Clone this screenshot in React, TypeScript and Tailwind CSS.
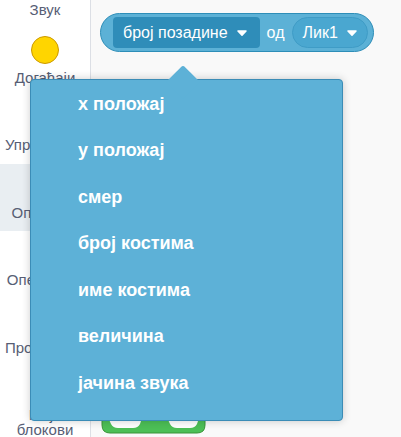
import React from 'react';

const categories = [
  { label: 'Звук', color: '#cf63cf', border: '#bd42bd' },
  { label: 'Догађаји', color: '#ffd500', border: '#cc9900' },
  { label: 'Управљање', color: '#ffab19', border: '#cf8b17' },
  { label: 'Опажање', color: '#5cb1d6', border: '#2e8eb8', selected: true },
  { label: 'Оператори', color: '#59c059', border: '#389438' },
  { label: 'Променљиве', color: '#ff8c1a', border: '#db6e00' },
  { label: 'Моји блокови', color: '#ff6680', border: '#ff3355' },
];

const menuItems = ['x положај', 'y положај', 'смер', 'број костима', 'име костима', 'величина', 'јачина звука'];

function Caret() {
  return (
    <svg width="10" height="6" viewBox="0 0 10 6" className="shrink-0">
      <path d="M1 1 L9 1 L5 5.2 Z" fill="#fff" stroke="#fff" strokeWidth="1.5" strokeLinejoin="round" />
    </svg>
  );
}

export default function App() {
  return (
    <div
      className="relative flex w-[401px] h-[437px] overflow-hidden bg-[#f9f9f9]"
      style={{ fontFamily: '"Liberation Sans", Arial, sans-serif' }}
    >
      {/* Category sidebar */}
      <aside className="w-[91px] shrink-0 overflow-hidden bg-white border-r border-[#dcdfe5]">
        <div className="-mt-[38.75px] flex flex-col">
          {categories.map((c) => (
            <div
              key={c.label}
              className={`flex h-[67.5px] flex-col items-center pt-[7px] ${c.selected ? 'bg-[#e9eef2]' : ''}`}
            >
              <div
                className="h-[28px] w-[28px] shrink-0 rounded-full border"
                style={{ backgroundColor: c.color, borderColor: c.border }}
              />
              <div className="mt-[6px] max-w-[80px] text-center text-[15px] leading-[15px] text-[#575e75]">
                {c.label}
              </div>
            </div>
          ))}
        </div>
      </aside>

      {/* Script canvas */}
      <main className="relative flex-1">
        <div className="absolute left-[9px] top-[13px] flex h-[39px] items-center rounded-full border border-[#2e8eb8] bg-[#5cb1d6] pl-[12px] pr-[5px] text-white">
          <div className="flex h-[31px] items-center rounded-[4px] bg-[#2f8db9] pl-[10px] pr-[13px] text-[16px]">
            <span>број позадине</span>
            <span className="ml-[9px]">
              <Caret />
            </span>
          </div>
          <span className="ml-[7px] text-[16px]">од</span>
          <div className="ml-[8px] flex h-[31px] items-center rounded-full border border-[#3f9cc6] bg-[#4aa7d0] pl-[9px] pr-[10px] text-[16px]">
            <span>Лик1</span>
            <span className="ml-[9px]">
              <Caret />
            </span>
          </div>
        </div>

        <svg className="absolute left-[10px] top-[395px]" width="108" height="40" viewBox="0 0 108 40">
          <path
            d="M1 0 L1 30 Q1 38 9 38 L96 38 Q104 38 104 30 L104 0 Z"
            fill="#4cbf56"
            stroke="#389438"
            strokeWidth="1"
          />
          <path d="M6 20 L10 29 Q12 33 17 33 L32 33 Q37 33 39 29 L42 20 Z" fill="#fff" />
          <path d="M65 20 L69 29 Q71 33 76 33 L89 33 Q94 33 96 29 L99 20 Z" fill="#fff" />
        </svg>
      </main>

      {/* Dropdown menu */}
      <div className="absolute left-[30px] top-[79px] h-[342px] w-[313px] rounded-[4px] border border-[#3b8cb6] bg-[#5db1d7] shadow-[0_0_8px_rgba(0,0,0,0.2)]">
        <div className="absolute left-[140px] top-[-10px] h-[24px] w-[24px] rotate-45 rounded-tl-[3px] bg-[#5db1d7]" />
        <div className="relative flex flex-col pt-[1px]">
          {menuItems.map((item) => (
            <div key={item} className="flex h-[46.5px] items-center pl-[47px] text-[18px] font-bold text-white">
              {item}
            </div>
          ))}
        </div>
      </div>
    </div>
  );
}
